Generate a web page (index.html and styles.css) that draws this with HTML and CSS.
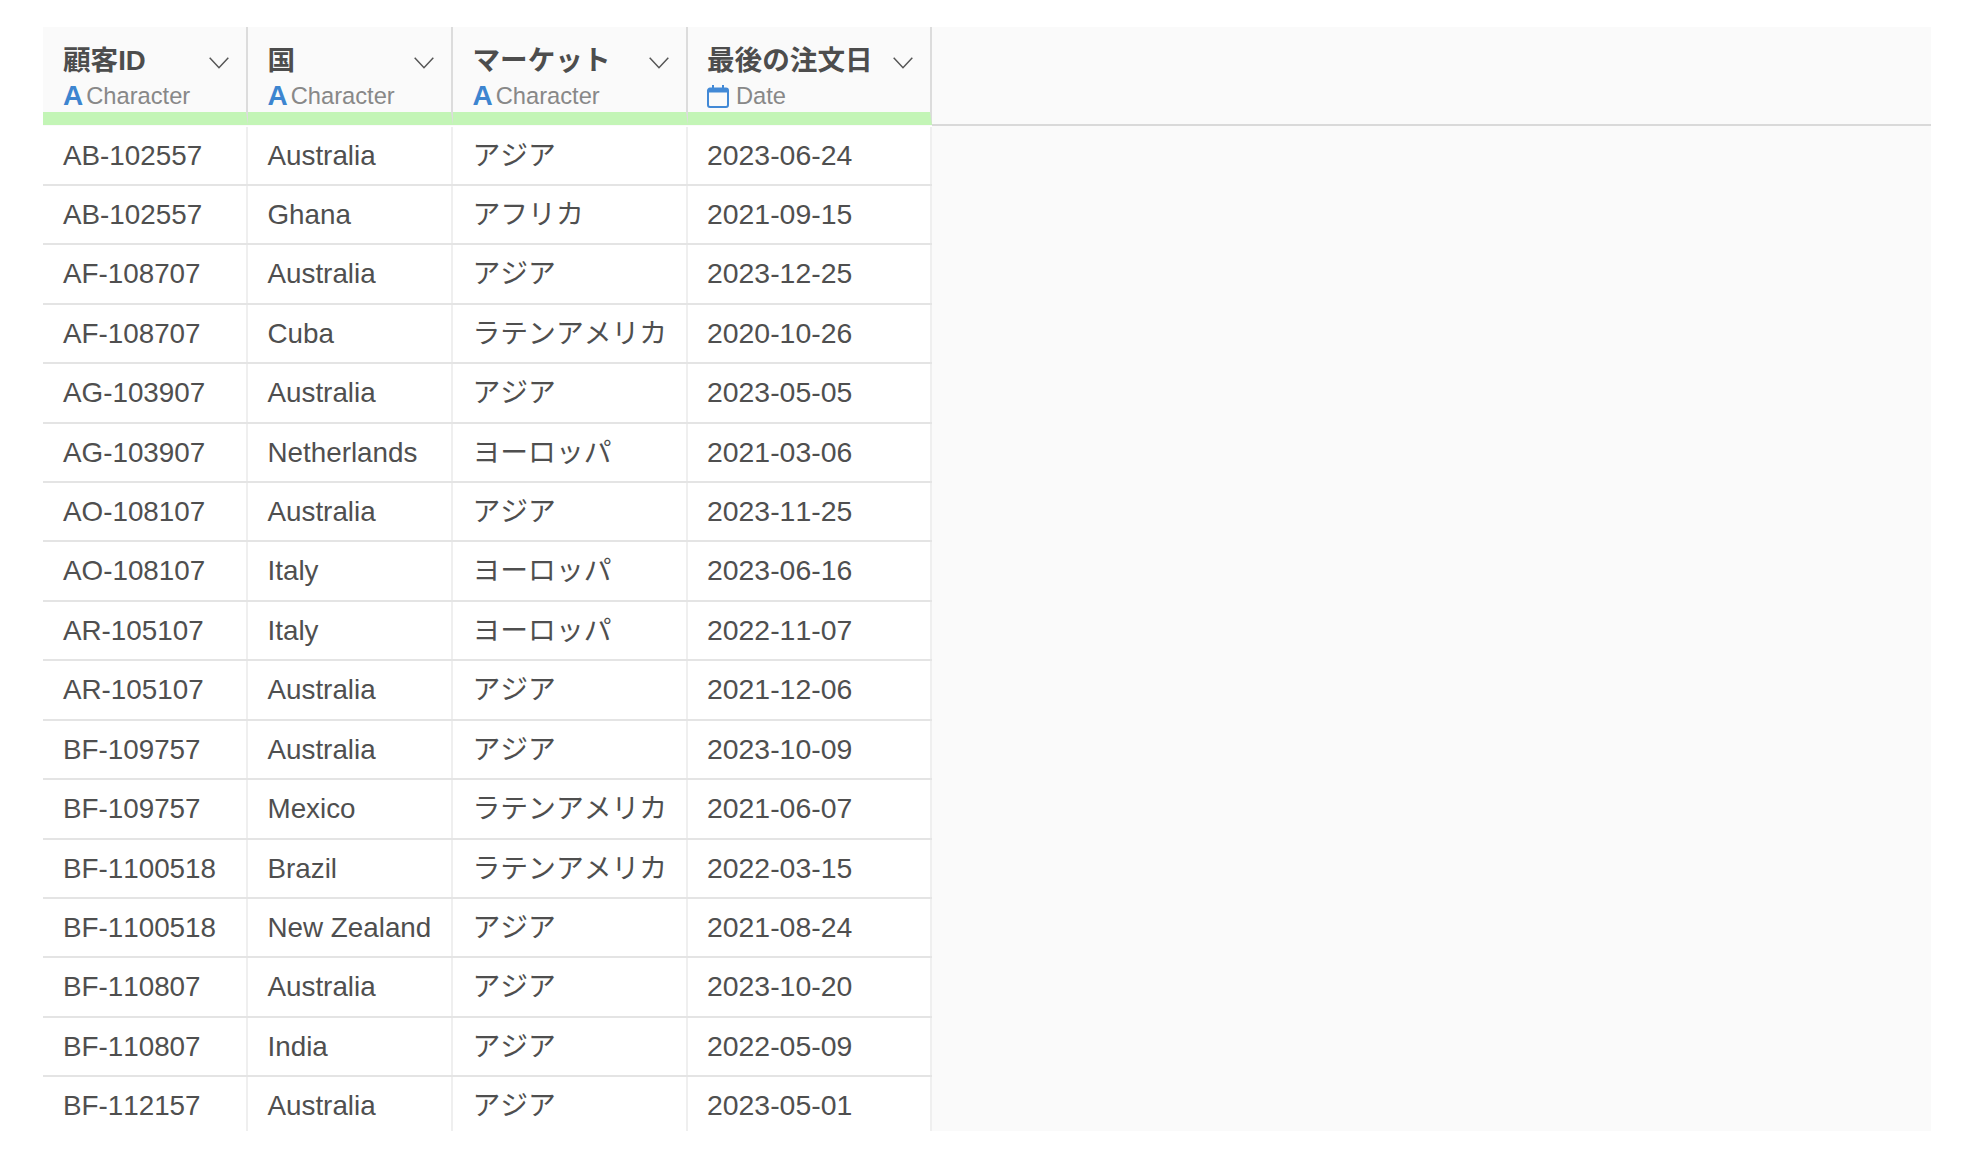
FILE: index.html
```html
<!DOCTYPE html>
<html lang="ja">
<head>
<meta charset="utf-8">
<title>Table</title>
<link rel="stylesheet" href="styles.css">
</head>
<body>
<main class="sheet">
<div class="table">
<div class="row head">
<div class="hcell"><div class="hline"><span class="hname">顧客ID</span><svg class="chev" viewBox="0 0 20 12"><path d="M.7.7 10 10.7 19.3.7"/></svg></div><div class="type"><span class="type-a">A</span>Character</div></div>
<div class="hcell"><div class="hline"><span class="hname">国</span><svg class="chev" viewBox="0 0 20 12"><path d="M.7.7 10 10.7 19.3.7"/></svg></div><div class="type"><span class="type-a">A</span>Character</div></div>
<div class="hcell"><div class="hline"><span class="hname">マーケット</span><svg class="chev" viewBox="0 0 20 12"><path d="M.7.7 10 10.7 19.3.7"/></svg></div><div class="type"><span class="type-a">A</span>Character</div></div>
<div class="hcell hcell-date"><div class="hline"><span class="hname">最後の注文日</span><svg class="chev" viewBox="0 0 20 12"><path d="M.7.7 10 10.7 19.3.7"/></svg></div><div class="type"><svg class="cal" viewBox="0 0 22 24"><path class="cal-frame" d="M3 4.500h16a2 2 0 0 1 2 2V21a2 2 0 0 1-2 2H3a2 2 0 0 1-2-2V6.500a2 2 0 0 1 2-2z"/><path class="cal-bar" d="M1 5h20v3.500H1zM5 1h2v4H5zM15 1h2v4h-2z"/></svg>Date</div></div>
</div>
<div class="row"><div class="cell">AB-102557</div><div class="cell">Australia</div><div class="cell">アジア</div><div class="cell date">2023-06-24</div></div>
<div class="row"><div class="cell">AB-102557</div><div class="cell">Ghana</div><div class="cell">アフリカ</div><div class="cell date">2021-09-15</div></div>
<div class="row"><div class="cell">AF-108707</div><div class="cell">Australia</div><div class="cell">アジア</div><div class="cell date">2023-12-25</div></div>
<div class="row"><div class="cell">AF-108707</div><div class="cell">Cuba</div><div class="cell">ラテンアメリカ</div><div class="cell date">2020-10-26</div></div>
<div class="row"><div class="cell">AG-103907</div><div class="cell">Australia</div><div class="cell">アジア</div><div class="cell date">2023-05-05</div></div>
<div class="row"><div class="cell">AG-103907</div><div class="cell">Netherlands</div><div class="cell">ヨーロッパ</div><div class="cell date">2021-03-06</div></div>
<div class="row"><div class="cell">AO-108107</div><div class="cell">Australia</div><div class="cell">アジア</div><div class="cell date">2023-11-25</div></div>
<div class="row"><div class="cell">AO-108107</div><div class="cell">Italy</div><div class="cell">ヨーロッパ</div><div class="cell date">2023-06-16</div></div>
<div class="row"><div class="cell">AR-105107</div><div class="cell">Italy</div><div class="cell">ヨーロッパ</div><div class="cell date">2022-11-07</div></div>
<div class="row"><div class="cell">AR-105107</div><div class="cell">Australia</div><div class="cell">アジア</div><div class="cell date">2021-12-06</div></div>
<div class="row"><div class="cell">BF-109757</div><div class="cell">Australia</div><div class="cell">アジア</div><div class="cell date">2023-10-09</div></div>
<div class="row"><div class="cell">BF-109757</div><div class="cell">Mexico</div><div class="cell">ラテンアメリカ</div><div class="cell date">2021-06-07</div></div>
<div class="row"><div class="cell">BF-1100518</div><div class="cell">Brazil</div><div class="cell">ラテンアメリカ</div><div class="cell date">2022-03-15</div></div>
<div class="row"><div class="cell">BF-1100518</div><div class="cell">New Zealand</div><div class="cell">アジア</div><div class="cell date">2021-08-24</div></div>
<div class="row"><div class="cell">BF-110807</div><div class="cell">Australia</div><div class="cell">アジア</div><div class="cell date">2023-10-20</div></div>
<div class="row"><div class="cell">BF-110807</div><div class="cell">India</div><div class="cell">アジア</div><div class="cell date">2022-05-09</div></div>
<div class="row"><div class="cell">BF-112157</div><div class="cell">Australia</div><div class="cell">アジア</div><div class="cell date">2023-05-01</div></div>
</div>
</main>
</body>
</html>
```
FILE: styles.css
```css
html, body {
  margin: 0;
  background: #fff;
}
body {
  padding: 27px 51px 0 43px;
  height: 1168px;
  box-sizing: border-box;
  overflow: hidden;
  font-family: "Liberation Sans", "Noto Sans CJK JP", sans-serif;
  font-kerning: none;
  color: #4f4f4f;
}
.sheet {
  height: 1104px;
  overflow: hidden;
  background: #fafafa;
  position: relative;
}
.sheet::before {
  content: "";
  display: block;
  position: absolute;
  left: 0;
  right: 0;
  top: 97px;
  height: 2px;
  background: #d9d9d9;
}
.table {
  width: 889px;
  position: relative;
}
.row {
  display: grid;
  grid-template-columns: 204.5px 205px 235.5px 244px;
  height: 59.43px;
  box-sizing: border-box;
  background: #fff;
  border-bottom: 2px solid #e4e4e4;
}
.head {
  height: 99.5px;
  background: #fafafa;
  border-bottom: 1.5px solid #fff;
  position: relative;
}
.cell {
  font-size: 27.8px;
  line-height: 57px;
  padding-left: 20px;
  border-right: 2px solid #efefef;
  white-space: nowrap;
  overflow: hidden;
}
.date {
  font-size: 28.4px;
  padding-left: 19px;
}
.hcell {
  display: flex;
  flex-direction: column;
  height: 98px;
  box-sizing: border-box;
  padding: 18px 0 0 20px;
  border-right: 2px solid #dcdcdc;
  border-bottom: 13px solid #c3f5b6;
}
.hcell-date {
  padding-left: 19px;
}
.hline {
  display: flex;
  justify-content: space-between;
  align-items: center;
  height: 32px;
  padding-right: 17px;
}
.hname {
  font-size: 27.6px;
  font-weight: 700;
  line-height: 32px;
  color: #4d4d4d;
  white-space: nowrap;
}
.chev {
  width: 20px;
  height: 12px;
  flex: none;
  margin-top: 3px;
  fill: none;
  stroke: #555;
  stroke-width: 1.500;
}
.type {
  display: flex;
  align-items: center;
  height: 28px;
  margin-top: 5px;
  font-size: 23.7px;
  color: #888;
  white-space: nowrap;
}
.type-a {
  font-size: 28px;
  font-weight: 700;
  color: #3d85d0;
  margin-right: 3px;
}
.cal {
  width: 22px;
  height: 24px;
  flex: none;
  margin-right: 7px;
}
.cal-frame {
  fill: none;
  stroke: #4289d6;
  stroke-width: 2;
}
.cal-bar {
  fill: #4289d6;
}
```
